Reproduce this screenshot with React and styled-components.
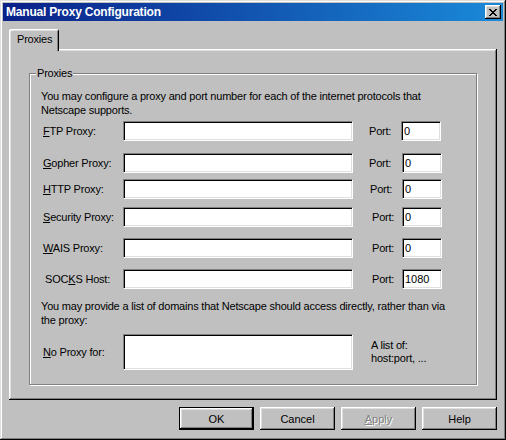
import styled, { createGlobalStyle } from "styled-components";

const GlobalStyle = createGlobalStyle`
  html, body {
    margin: 0;
    background: #c0c0c0;
  }
  body {
    font-family: "Liberation Sans", Arial, sans-serif;
    font-size: 11px;
    letter-spacing: -0.2px;
    color: #000;
  }
`;

const raised = `
  box-shadow: inset -1px -1px #000, inset 1px 1px #fff,
    inset -2px -2px #808080, inset 2px 2px #dfdfdf;
`;

const Window = styled.div`
  width: 506px;
  height: 440px;
  box-sizing: border-box;
  padding: 3px;
  background: #c0c0c0;
  display: flex;
  flex-direction: column;
  box-shadow: inset -1px -1px #000, inset 1px 1px #dfdfdf,
    inset -2px -2px #808080, inset 2px 2px #fff;
`;

const TitleBar = styled.div`
  height: 18px;
  display: flex;
  align-items: center;
  justify-content: space-between;
  padding: 0 2px 0 3px;
  background: linear-gradient(90deg, #0a2089 0%, #1a8ad8 100%);
`;

const Title = styled.span`
  color: #fff;
  font-weight: bold;
  font-size: 12px;
`;

const CloseButton = styled.div`
  width: 16px;
  height: 14px;
  box-sizing: border-box;
  background: #c0c0c0;
  display: flex;
  align-items: center;
  justify-content: center;
  ${raised}
`;

const Body = styled.div`
  padding: 8px 6px 0 6px;
`;

const TabStrip = styled.div`
  display: flex;
  height: 20px;
`;

const Tab = styled.div`
  position: relative;
  z-index: 1;
  width: 50px;
  height: 22px;
  box-sizing: border-box;
  margin-bottom: -2px;
  background: #c0c0c0;
  border-radius: 2px 2px 0 0;
  padding: 4px 0 0 8px;
  box-shadow: inset 1px 1px #fff, inset -1px 0 #000, inset 2px 2px #dfdfdf,
    inset -2px 0 #808080;
`;

const Panel = styled.div`
  width: 488px;
  height: 351px;
  box-sizing: border-box;
  padding: 2px;
  box-shadow: inset -1px -1px #000, inset 1px 1px #fff,
    inset -2px -2px #808080, inset 2px 2px #dfdfdf;
`;

const GroupBox = styled.div`
  margin: 22px 0 0 18px;
  width: 448px;
  height: 312px;
  box-sizing: border-box;
  border: 1px solid #808080;
  box-shadow: 1px 1px 0 #fff, inset 1px 1px 0 #fff;
`;

const Legend = styled.div`
  width: fit-content;
  margin: -7px 0 0 6px;
  padding: 0 1px;
  line-height: 13px;
  background: #c0c0c0;
`;

const Note = styled.p`
  margin: ${(p) => p.$top}px 0 0 11px;
  line-height: 14px;
`;

const Row = styled.div`
  display: flex;
  align-items: center;
  margin-top: ${(p) => p.$top}px;
  padding-left: 13px;
`;

const Label = styled.label`
  width: 80px;
  box-sizing: border-box;
  padding-left: ${(p) => p.$indent || 0}px;
`;

const Field = styled.input`
  width: ${(p) => p.$width}px;
  height: ${(p) => p.$height || 20}px;
  box-sizing: border-box;
  margin: 0;
  padding: 0 2px;
  font: inherit;
  color: #000;
  background: #fff;
  border: 1px solid;
  border-color: #808080 #fff #fff #808080;
  box-shadow: inset 1px 1px #000, inset -1px -1px #dfdfdf;
  outline: none;
`;

const PortLabel = styled.span`
  margin-left: ${(p) => p.$left}px;
  width: ${(p) => p.$width}px;
`;

const Hint = styled.div`
  margin-left: 18px;
  line-height: 13px;
`;

const ButtonRow = styled.div`
  display: flex;
  justify-content: flex-end;
  gap: 6px;
  margin-top: 7px;
`;

const Button = styled.button`
  width: 75px;
  height: 23px;
  box-sizing: border-box;
  margin: 0;
  padding: 0;
  font: inherit;
  color: ${(p) => (p.disabled ? "#808080" : "#000")};
  text-shadow: ${(p) => (p.disabled ? "1px 1px 0 #fff" : "none")};
  background: #c0c0c0;
  border: ${(p) => (p.$default ? "1px solid #000" : "none")};
  ${raised}
`;

const proxies = [
  { key: "F", rest: "TP Proxy:", top: 4, port: "0", portLabel: 369, portField: 401 },
  { key: "G", rest: "opher Proxy:", top: 12, port: "0", portLabel: 369, portField: 402 },
  { key: "H", rest: "TTP Proxy:", top: 6, port: "0", portLabel: 370, portField: 402 },
  { key: "S", rest: "ecurity Proxy:", top: 8, port: "0", portLabel: 372, portField: 402 },
  { key: "W", rest: "AIS Proxy:", top: 11, port: "0", portLabel: 372, portField: 402 },
  { pre: "SOC", key: "K", rest: "S Host:", top: 11, port: "1080", portLabel: 372, portField: 402, indent: 2 },
];

function App() {
  return (
    <>
      <GlobalStyle />
      <Window>
        <TitleBar>
          <Title>Manual Proxy Configuration</Title>
          <CloseButton>
            <svg width="8" height="7" viewBox="0 0 8 7" shapeRendering="crispEdges">
              <path
                d="M0 0h2v1h1v1h2v-1h1v-1h2v1h-1v1h-1v1h-1v1h1v1h1v1h1v1h-2v-1h-1v-1h-2v1h-1v1h-2v-1h1v-1h1v-1h1v-1h-1v-1h-1v-1h-1z"
                fill="#000"
              />
            </svg>
          </CloseButton>
        </TitleBar>
        <Body>
          <TabStrip>
            <Tab>Proxies</Tab>
          </TabStrip>
          <Panel>
            <GroupBox>
              <Legend>Proxies</Legend>
              <Note $top={9}>
                You may configure a proxy and port number for each of the internet protocols that
                <br />
                Netscape supports.
              </Note>
              {proxies.map((p) => (
                <Row key={p.rest} $top={p.top}>
                  <Label $indent={p.indent}>
                    {p.pre}
                    <u>{p.key}</u>
                    {p.rest}
                  </Label>
                  <Field $width={230} readOnly defaultValue="" />
                  <PortLabel $left={p.portLabel - 353} $width={p.portField - p.portLabel}>
                    Port:
                  </PortLabel>
                  <Field $width={40} readOnly defaultValue={p.port} />
                </Row>
              ))}
              <Note $top={10}>
                You may provide a list of domains that Netscape should access directly, rather than via
                <br />
                the proxy:
              </Note>
              <Row $top={7}>
                <Label>
                  <u>N</u>o Proxy for:
                </Label>
                <Field $width={230} $height={36} readOnly defaultValue="" />
                <Hint>
                  A list of:
                  <br />
                  host:port, ...
                </Hint>
              </Row>
            </GroupBox>
          </Panel>
          <ButtonRow>
            <Button $default>OK</Button>
            <Button>Cancel</Button>
            <Button disabled>
              <u>A</u>pply
            </Button>
            <Button>Help</Button>
          </ButtonRow>
        </Body>
      </Window>
    </>
  );
}

export default App;
